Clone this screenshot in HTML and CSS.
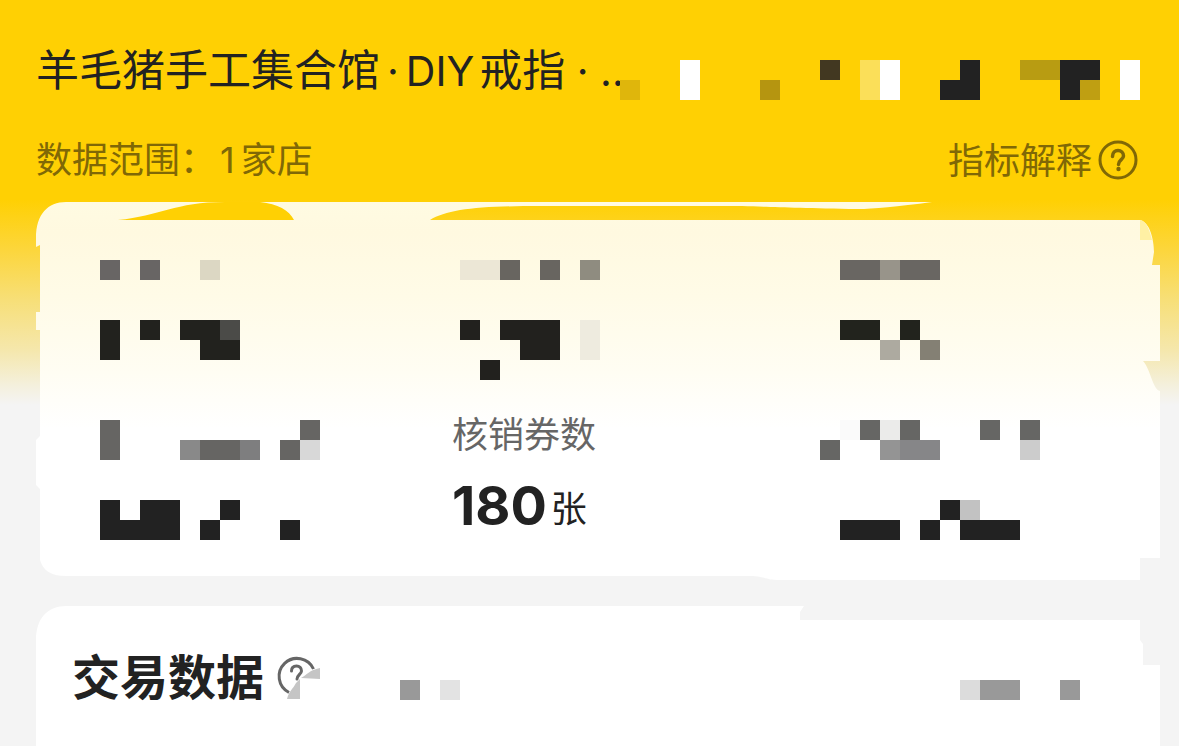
FILE: index.html
```html
<!DOCTYPE html>
<html lang="zh-CN">
<head>
<meta charset="utf-8">
<meta name="viewport" content="width=device-width, initial-scale=1">
<title>经营数据</title>
<link rel="stylesheet" href="styles.css">
</head>
<body>
<header class="header">
  <div class="shop-row">
    <h1 class="shop-name">羊毛猪手工集合馆<span class="latin dot">·</span><span class="latin diy">DIY</span>戒指<span class="latin"> · ..</span></h1>
    <svg class="mosaic" width="520" height="40" viewBox="620 60 520 40" shape-rendering="crispEdges" aria-hidden="true">
      <path fill="#dfb60c" d="M620 80h20v20h-20z"/>
      <path fill="#fff" d="M680 60h20v40h-20zM880 60h20v40h-20zM1120 60h20v40h-20z"/>
      <path fill="#b59510" d="M760 80h20v20h-20z"/>
      <path fill="#423821" d="M820 60h20v20h-20z"/>
      <path fill="#fbdf59" d="M860 60h20v40h-20z"/>
      <path fill="#b89c12" d="M1020 60h40v20h-40z"/>
      <path fill="#222" d="M960 60h20v40h-40v-20h20zM1060 60h40v20h-20v20h-20z"/>
      <path fill="#bf9f12" d="M1080 80h20v20h-20z"/>
    </svg>
  </div>
  <div class="scope-row">
    <p class="scope">数据范围：<span class="count">1</span>家店</p>
    <button class="explain" type="button">指标解释
      <svg width="40" height="40" viewBox="0 0 40 40" fill="none" stroke="currentColor" stroke-linecap="round" aria-hidden="true">
        <circle cx="20" cy="20" r="18" stroke-width="3"/>
        <path stroke-width="3.500" d="M14.500 16.500C14.500 12.500 17 10.500 20 10.500S25.500 12.500 25.500 16C25.500 19.500 20.500 20 20.500 24.500"/>
        <circle cx="20.500" cy="29" r="2.200" fill="currentColor" stroke="none"/>
      </svg>
    </button>
  </div>
</header>
<main class="content">
  <section class="card summary" aria-label="数据概览">
    <svg class="card-shape" viewBox="36 202 1124 378" preserveAspectRatio="none" aria-hidden="true">
      <defs>
        <linearGradient id="cream" x1="0" y1="0" x2="0" y2="1">
          <stop offset="0" stop-color="#fffbe2"/>
          <stop offset=".08" stop-color="#fff9e0"/>
          <stop offset=".25" stop-color="#fffbe7"/>
          <stop offset=".45" stop-color="#fffdf3"/>
          <stop offset=".6" stop-color="#fff"/>
        </linearGradient>
      </defs>
      <path fill="url(#cream)" d="M66 202H932Q880 209 858 209C780 208 760 206 720 206H540C480 206 448 209 430 220H1140C1150 222 1154 240 1154 252L1152 265H1160V361H1143C1150 368 1153 390 1160 391V558H1140V580H776C766 580 765 576 748 576H66C50 576 43 570 40 560V489L36 485V440L40 436V330H36V312H40V245L36 247V238C36 214 48 202 66 202Z"/>
      <path fill="#ffd003" d="M118 220C160 216 175 202 225 202H260C278 204 289 210 294 220Z"/>
      <path fill="#fff0a4" d="M1140 220C1147 221 1150 232 1152 240H1140Z"/>
    </svg>
    <div class="metrics">
      <svg width="140" height="120" viewBox="100 260 140 120" shape-rendering="crispEdges" aria-hidden="true">
        <path fill="#686564" d="M100 260h20v20h-20zM140 260h20v20h-20z"/>
        <path fill="#dcd7c3" d="M200 260h20v20h-20z"/>
        <path fill="#22221e" d="M100 320h20v40h-20zM140 320h20v20h-20zM180 320h60v40h-40v-20h-20z"/>
        <path fill="#4b4b48" d="M220 320h20v20h-20z"/>
      </svg>
      <svg width="148" height="120" viewBox="452 260 148 120" shape-rendering="crispEdges" aria-hidden="true">
        <path fill="#ece7d6" d="M460 260h40v20h-40z"/>
        <path fill="#686560" d="M500 260h20v20h-20zM540 260h20v20h-20z"/>
        <path fill="#8f8c80" d="M580 260h20v20h-20z"/>
        <path fill="#22211e" d="M460 320h20v20h-20zM500 320h60v40h-40v-20h-20zM480 360h20v20h-20z"/>
        <path fill="#eeebdf" d="M580 320h20v40h-20z"/>
      </svg>
      <svg width="120" height="120" viewBox="820 260 120 120" shape-rendering="crispEdges" aria-hidden="true">
        <path fill="#696662" d="M840 260h100v20H840z"/>
        <path fill="#98948a" d="M880 260h20v20h-20z"/>
        <path fill="#22231d" d="M840 320h40v20h-40zM900 320h20v20h-20z"/>
        <path fill="#adaaa0" d="M880 340h20v20h-20z"/>
        <path fill="#848074" d="M920 340h20v20h-20z"/>
      </svg>
      <svg width="220" height="126" viewBox="100 414 220 126" shape-rendering="crispEdges" aria-hidden="true">
        <path fill="#666563" d="M100 420h20v40h-20zM200 440h40v20h-40zM280 440h20v20h-20zM300 420h20v20h-20z"/>
        <path fill="#898989" d="M180 440h20v20h-20z"/>
        <path fill="#7e7e7f" d="M240 440h20v20h-20z"/>
        <path fill="#d8d8d8" d="M300 440h20v20h-20z"/>
        <path fill="#222" d="M100 500h20v20h20v-20h40v40h-80zM200 520h20v20h-20zM220 500h20v20h-20zM280 520h20v20h-20z"/>
      </svg>
      <dl class="metric">
        <dt>核销券数</dt>
        <dd><strong>180</strong><span>张</span></dd>
      </dl>
      <svg width="220" height="126" viewBox="820 414 220 126" shape-rendering="crispEdges" aria-hidden="true">
        <path fill="#fafafa" d="M840 420h20v20h-20z"/>
        <path fill="#666664" d="M820 440h20v20h-20zM860 420h20v20h-20zM900 420h20v20h-20zM980 420h20v20h-20zM1020 420h20v20h-20z"/>
        <path fill="#ebebea" d="M880 420h20v20h-20z"/>
        <path fill="#949494" d="M880 440h20v20h-20z"/>
        <path fill="#868688" d="M900 440h40v20h-40z"/>
        <path fill="#ccc" d="M1020 440h20v20h-20z"/>
        <path fill="#c2c2c2" d="M960 500h20v20h-20z"/>
        <path fill="#222" d="M840 520h60v20h-60zM920 520h20v20h-20zM940 500h20v20h-20zM960 520h60v20h-60z"/>
      </svg>
    </div>
  </section>
  <section class="card trade" aria-labelledby="trade-title">
    <svg class="card-shape" viewBox="36 606 1124 140" preserveAspectRatio="none" aria-hidden="true">
      <path fill="#fff" d="M66 606H804L800 612V620H1140V640L1143 644V665H1160V746H36V640C36 618 48 606 66 606Z"/>
    </svg>
    <div class="trade-row">
      <h2 id="trade-title">交易数据</h2>
      <button class="help" type="button" aria-label="交易数据说明">
        <svg width="44" height="44" viewBox="276 656 44 44" fill="none" stroke="#666" stroke-linecap="round" aria-hidden="true">
          <path stroke-width="3" stroke-linecap="butt" d="M289 693.500A18 18 0 1 1 313.500 670"/>
          <path stroke-width="3" d="M291.500 672C291.500 668.500 293.500 667 296.500 667S301.500 669 301.500 672S297 676 297 680"/>
          <path fill="#c5c5c5" stroke="none" d="M301 679C307 676 309 671 320 669V680ZM300 680V700H287C289 692 293 690 296 684Z"/>
        </svg>
      </button>
      <svg class="mosaic" width="60" height="60" viewBox="400 647 60 60" shape-rendering="crispEdges" aria-hidden="true">
        <path fill="#999" d="M400 680h20v20h-20z"/>
        <path fill="#e3e3e3" d="M440 680h20v20h-20z"/>
      </svg>
      <svg class="mosaic trailing" width="120" height="60" viewBox="960 647 120 60" shape-rendering="crispEdges" aria-hidden="true">
        <path fill="#dcdcdc" d="M960 680h20v20h-20z"/>
        <path fill="#999" d="M980 680h40v20h-40zM1060 680h20v20h-20z"/>
      </svg>
    </div>
  </section>
</main>
</body>
</html>
```

FILE: styles.css
```css
* {
  box-sizing: border-box;
}

body {
  margin: 0;
  min-height: 100vh;
  display: flex;
  flex-direction: column;
  font-family: "Noto Sans CJK SC", sans-serif;
  color: #222;
  background: #f4f4f4 linear-gradient(#ffd003 0, #ffd003 200px, #fcd63c 250px, #f7df78 300px, #f5e7ac 350px, #f4f0dc 385px, #f4f4f4 405px) no-repeat;
}

h1,
h2,
p,
dl,
dd {
  margin: 0;
}

svg {
  display: block;
  flex: none;
}

button {
  padding: 0;
  border: 0;
  background: none;
  color: inherit;
  font: inherit;
  cursor: pointer;
}

.header {
  padding: 40px 39px 22px 36px;
  display: flex;
  flex-direction: column;
  gap: 40px;
}

.shop-row {
  display: flex;
  justify-content: space-between;
  align-items: flex-end;
}

.shop-name {
  flex: 1 1 0;
  min-width: 0;
  padding-bottom: 6px;
  font-size: 43px;
  font-weight: 400;
  line-height: 54px;
  white-space: nowrap;
}

.latin {
  font-family: Inter, sans-serif;
  font-size: 41px;
  line-height: 1;
}

.dot {
  margin: 0 7px;
}

.diy {
  margin-right: 5px;
}

.scope-row {
  display: flex;
  justify-content: space-between;
  padding-right: 2px;
  font-size: 36px;
  font-weight: 400;
  line-height: 36px;
  color: #806806;
}

.scope {
  line-height: 34px;
}

.count {
  margin: 0 6px 0 4px;
  font-family: Inter, sans-serif;
  line-height: 1;
}

.explain {
  display: flex;
  align-items: flex-start;
  gap: 6px;
}

.content {
  flex: 1;
  display: flex;
  flex-direction: column;
  gap: 26px;
  padding: 0 19px 0 36px;
}

.card {
  position: relative;
}

.card-shape {
  position: absolute;
  inset: 0;
  width: 100%;
  height: 100%;
  z-index: -1;
}

.summary {
  padding: 58px 0 40px 64px;
}

.metrics {
  display: grid;
  grid-template-columns: 352fr 368fr 340fr;
  row-gap: 34px;
}

.metric {
  display: flex;
  flex-direction: column;
  gap: 26px;
}

.metric dt {
  font-size: 36px;
  font-weight: 400;
  line-height: 36px;
  color: #666;
}

.metric dd {
  display: flex;
  align-items: center;
  gap: 4px;
  font-size: 36px;
  font-weight: 400;
  line-height: 60px;
}

.metric strong {
  font-family: Inter, sans-serif;
  font-size: 54px;
  font-weight: 700;
}

.trade {
  flex: 1;
  padding: 41px 80px 38px 36px;
}

.trade-row {
  display: flex;
  align-items: center;
}

.trade h2 {
  align-self: flex-start;
  font-size: 48px;
  font-weight: 700;
  line-height: 54px;
}

.help {
  margin: 0 80px 0 12px;
}

.trailing {
  margin-left: auto;
}
```
